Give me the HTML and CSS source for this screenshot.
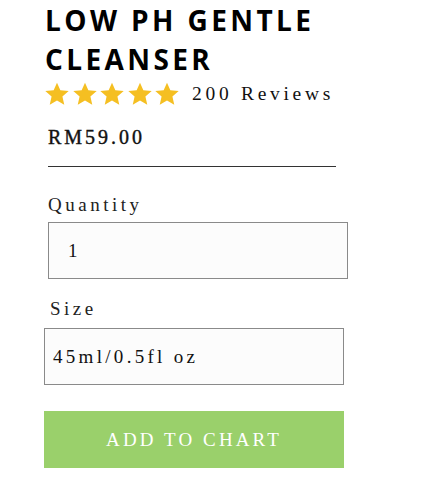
FILE: index.html
```html
<!DOCTYPE html>
<html>
<head>
<meta charset="utf-8">
<link rel="stylesheet" href="styles.css">
</head>
<body>
<div class="product">
  <h1 class="title">LOW PH GENTLE CLEANSER</h1>
  <div class="rating">
    <div class="stars">
      <svg viewBox="0 0 24 24" class="star"><path d="M12 1.5l3.1 7.1 7.7.7-5.8 5.1 1.7 7.6L12 18l-6.7 4 1.7-7.6-5.8-5.1 7.7-.7z"/></svg>
      <svg viewBox="0 0 24 24" class="star"><path d="M12 1.5l3.1 7.1 7.7.7-5.8 5.1 1.7 7.6L12 18l-6.7 4 1.7-7.6-5.8-5.1 7.7-.7z"/></svg>
      <svg viewBox="0 0 24 24" class="star"><path d="M12 1.5l3.1 7.1 7.7.7-5.8 5.1 1.7 7.6L12 18l-6.7 4 1.7-7.6-5.8-5.1 7.7-.7z"/></svg>
      <svg viewBox="0 0 24 24" class="star"><path d="M12 1.5l3.1 7.1 7.7.7-5.8 5.1 1.7 7.6L12 18l-6.7 4 1.7-7.6-5.8-5.1 7.7-.7z"/></svg>
      <svg viewBox="0 0 24 24" class="star"><path d="M12 1.5l3.1 7.1 7.7.7-5.8 5.1 1.7 7.6L12 18l-6.7 4 1.7-7.6-5.8-5.1 7.7-.7z"/></svg>
    </div>
    <span class="reviews">200 Reviews</span>
  </div>
  <div class="price">RM59.00</div>
  <hr class="divider">
  <label class="label label-qty">Quantity</label>
  <div class="field field-qty">1</div>
  <label class="label label-size">Size</label>
  <div class="field field-size">45ml/0.5fl oz</div>
  <button class="btn">ADD TO CHART</button>
</div>
</body>
</html>
```
FILE: styles.css
```css
html, body {
  margin: 0;
  padding: 0;
  background: #ffffff;
}
body {
  font-family: "Liberation Serif", "DejaVu Serif", serif;
  color: #111;
}
.product {
  padding: 0 0 0 44px;
  width: 300px;
  display: flex;
  flex-direction: column;
  align-items: flex-start;
}
.title {
  margin: 0;
  padding: 1px 0 0 1px;
  font-family: "Open Sans", sans-serif;
  font-weight: 700;
  font-size: 28px;
  line-height: 39px;
  letter-spacing: 3.4px;
  color: #000;
  width: 300px;
}
.rating {
  display: flex;
  align-items: center;
  gap: 12px;
  margin-top: 2px;
  height: 26px;
}
.stars {
  display: flex;
  gap: 1.5px;
}
.star {
  width: 26px;
  height: 26px;
  fill: #f5bf22;
}
.reviews {
  font-size: 19.5px;
  letter-spacing: 3.7px;
  color: #111;
}
.price {
  margin: 19px 0 0 4px;
  font-size: 20px;
  font-weight: 400;
  -webkit-text-stroke: 0.4px #111;
  letter-spacing: 3px;
  line-height: 22px;
  color: #111;
}
.divider {
  margin: 18px 0 0 4px;
  width: 288px;
  border: 0;
  border-top: 1px solid #333;
  height: 0;
}
.label {
  display: block;
  font-size: 19px;
  letter-spacing: 3.5px;
  line-height: 22px;
  color: #222;
}
.label-qty {
  margin: 27px 0 0 4px;
}
.label-size {
  margin: 19px 0 0 6px;
}
.field {
  box-sizing: border-box;
  width: 300px;
  height: 57px;
  border: 1px solid #8a8a8a;
  background: #fcfcfc;
  display: flex;
  align-items: center;
  font-size: 19px;
  letter-spacing: 3.3px;
  color: #111;
}
.field-qty {
  margin: 6px 0 0 4px;
  padding-left: 19px;
}
.field-size {
  margin: 8px 0 0 0;
  padding-left: 8px;
}
.btn {
  margin-top: 26px;
  width: 300px;
  height: 57px;
  border: 0;
  background: #9ad06b;
  color: #fff;
  font-family: "Liberation Serif", serif;
  font-size: 19px;
  letter-spacing: 3.1px;
  font-weight: 400;
  padding: 0;
}
```
